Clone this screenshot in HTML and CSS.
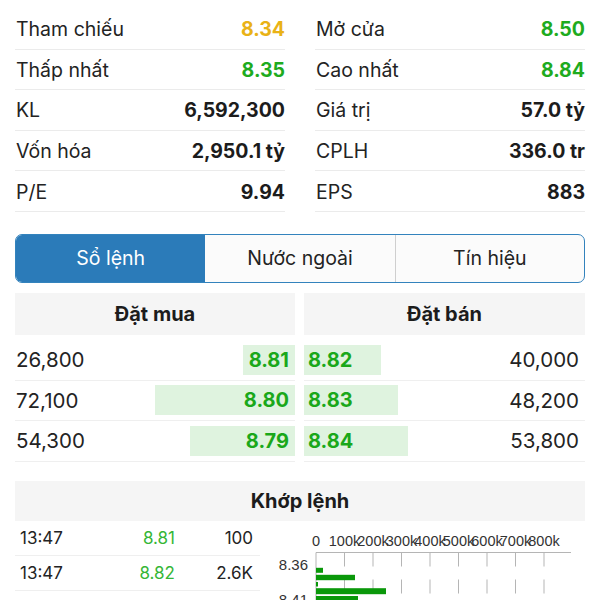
FILE: index.html
```html
<!DOCTYPE html>
<html lang="vi">
<head>
<meta charset="utf-8">
<title>Thông tin cổ phiếu</title>
<link rel="stylesheet" href="styles.css">
</head>
<body>
<div class="page">
  <section class="stats">
    <div class="col">
      <div class="row"><span class="lbl">Tham chiếu</span><span class="val ref">8.34</span></div>
      <div class="row"><span class="lbl">Thấp nhất</span><span class="val up">8.35</span></div>
      <div class="row"><span class="lbl">KL</span><span class="val">6,592,300</span></div>
      <div class="row"><span class="lbl">Vốn hóa</span><span class="val">2,950.1 tỷ</span></div>
      <div class="row"><span class="lbl">P/E</span><span class="val">9.94</span></div>
    </div>
    <div class="col">
      <div class="row"><span class="lbl">Mở cửa</span><span class="val up">8.50</span></div>
      <div class="row"><span class="lbl">Cao nhất</span><span class="val up">8.84</span></div>
      <div class="row"><span class="lbl">Giá trị</span><span class="val">57.0 tỷ</span></div>
      <div class="row"><span class="lbl">CPLH</span><span class="val">336.0 tr</span></div>
      <div class="row"><span class="lbl">EPS</span><span class="val">883</span></div>
    </div>
  </section>

  <nav class="tabs">
    <div class="tab active">Sổ lệnh</div>
    <div class="tab">Nước ngoài</div>
    <div class="tab">Tín hiệu</div>
  </nav>

  <section class="book">
    <div class="side buy">
      <div class="head">Đặt mua</div>
      <div class="brow"><span class="vol">26,800</span><span class="bar" style="width:52px">8.81</span></div>
      <div class="brow"><span class="vol">72,100</span><span class="bar" style="width:140px">8.80</span></div>
      <div class="brow"><span class="vol">54,300</span><span class="bar" style="width:105px">8.79</span></div>
    </div>
    <div class="side sell">
      <div class="head">Đặt bán</div>
      <div class="brow"><span class="bar" style="width:77px">8.82</span><span class="vol">40,000</span></div>
      <div class="brow"><span class="bar" style="width:94px">8.83</span><span class="vol">48,200</span></div>
      <div class="brow"><span class="bar" style="width:104px">8.84</span><span class="vol">53,800</span></div>
    </div>
  </section>

  <section class="match">
    <div class="head">Khớp lệnh</div>
    <div class="mbody">
      <div class="trades">
        <div class="trow"><span>13:47</span><span class="tp">8.81</span><span class="tv">100</span></div>
        <div class="trow"><span>13:47</span><span class="tp">8.82</span><span class="tv">2.6K</span></div>
        <div class="trow"><span>13:47</span><span class="tp">8.81</span><span class="tv">5.6K</span></div>
      </div>
      <svg class="chart" width="325" height="110" viewBox="0 0 325 110">
        <g class="axis-labels">
          <text x="56" y="24.5">0</text>
          <text x="84.5" y="24.5">100k</text>
          <text x="113" y="24.5">200k</text>
          <text x="141.5" y="24.5">300k</text>
          <text x="170" y="24.5">400k</text>
          <text x="198.5" y="24.5">500k</text>
          <text x="227" y="24.5">600k</text>
          <text x="255.5" y="24.5">700k</text>
          <text x="284" y="24.5">800k</text>
        </g>
        <line x1="56" y1="31.5" x2="311" y2="31.5" class="axis"/>
        <line x1="56" y1="31.5" x2="56" y2="110" class="axis"/>
        <g class="grid">
          <line x1="84.5" y1="31.5" x2="84.5" y2="110"/>
          <line x1="113" y1="31.5" x2="113" y2="110"/>
          <line x1="141.5" y1="31.5" x2="141.5" y2="110"/>
          <line x1="170" y1="31.5" x2="170" y2="110"/>
          <line x1="198.5" y1="31.5" x2="198.5" y2="110"/>
          <line x1="227" y1="31.5" x2="227" y2="110"/>
          <line x1="255.5" y1="31.5" x2="255.5" y2="110"/>
          <line x1="284" y1="31.5" x2="284" y2="110"/>
        </g>
        <g class="ylabels">
          <text x="48" y="49">8.36</text>
          <text x="48" y="84">8.41</text>
        </g>
        <g class="bars">
          <rect x="56" y="46.8" width="7" height="5"/>
          <rect x="56" y="53.8" width="39" height="5.4"/>
          <rect x="56" y="61" width="2" height="4.5"/>
          <rect x="56" y="67.2" width="70" height="6"/>
          <rect x="56" y="75" width="42" height="6"/>
        </g>
      </svg>
    </div>
  </section>
</div>
</body>
</html>
```
FILE: styles.css
```css
html, body {
  margin: 0;
  padding: 0;
  background: #ffffff;
}

body {
  font-family: Inter, "Noto Sans", "DejaVu Sans", sans-serif;
  color: #1f1f1f;
}

.page {
  padding: 9px 15px 0 15px;
}

/* ---------- stats ---------- */
.stats {
  display: grid;
  grid-template-columns: 1fr 1fr;
  column-gap: 30px;
}

.row {
  display: flex;
  justify-content: space-between;
  align-items: center;
  height: 38.6px;
  padding-top: 1px;
  border-bottom: 1px solid #ebebeb;
  font-size: 19.5px;
}

.lbl {
  color: #232323;
  padding-left: 1px;
}

.val {
  font-weight: 700;
  color: #1c1c1c;
}

.val.ref {
  color: #e9b216;
}

.val.up {
  color: #1eab1e;
}

/* ---------- tabs ---------- */
.tabs {
  margin-top: 22px;
  display: grid;
  grid-template-columns: 1fr 1fr 1fr;
  height: 49px;
  box-sizing: border-box;
  border: 1.5px solid #3383bd;
  border-radius: 7px;
  overflow: hidden;
  background: #fbfbfb;
}

.tab {
  display: flex;
  align-items: center;
  justify-content: center;
  font-size: 19.5px;
  color: #232323;
}

.tab + .tab {
  border-left: 1px solid #cfcfcf;
}

.tab.active {
  background: #2b7bb9;
  color: #ffffff;
}

.tab.active + .tab {
  border-left: none;
}

/* ---------- order book ---------- */
.book {
  margin-top: 10px;
  display: grid;
  grid-template-columns: 280px 1fr;
  column-gap: 9px;
}

.head {
  height: 42px;
  display: flex;
  align-items: center;
  justify-content: center;
  background: #f5f5f5;
  font-weight: 700;
  font-size: 20px;
  color: #1c1c1c;
}

.side .head {
  margin-bottom: 5px;
}

.brow {
  display: flex;
  justify-content: space-between;
  align-items: center;
  height: 39.6px;
  border-bottom: 1px solid #efefef;
  font-size: 20.5px;
}

.bar {
  height: 30px;
  display: flex;
  align-items: center;
  box-sizing: border-box;
  background: #dff3df;
  color: #1aa81a;
  font-weight: 700;
  font-size: 20px;
}

.buy .bar {
  justify-content: flex-end;
  padding-right: 6px;
}

.sell .bar {
  justify-content: flex-start;
  padding-left: 4px;
}

.buy .vol {
  padding-left: 1px;
}

.sell .vol {
  padding-right: 6px;
}

.vol {
  color: #232323;
}

/* ---------- matched ---------- */
.match {
  margin-top: 19px;
}

.match .head {
  height: 40px;
}

.mbody {
  display: flex;
  align-items: flex-start;
}

.trades {
  width: 245px;
  flex: none;
}

.trow {
  display: grid;
  grid-template-columns: 1fr 60px 78px;
  align-items: center;
  height: 34px;
  padding: 0 7px 0 5px;
  border-bottom: 1px solid #efefef;
  font-size: 17px;
  color: #232323;
}

.tp {
  text-align: right;
  color: #36b636;
}

.tv {
  text-align: right;
}

.chart {
  display: block;
  flex: none;
}

.axis-labels text {
  font-family: "Liberation Sans", Arial, sans-serif;
  font-size: 14.5px;
  fill: #333333;
  text-anchor: middle;
}

.ylabels text {
  font-family: "Liberation Sans", Arial, sans-serif;
  font-size: 15px;
  fill: #333333;
  text-anchor: end;
}

.axis {
  stroke: #b5b5b5;
  stroke-width: 1;
}

.grid line {
  stroke: #b5b5b5;
  stroke-width: 1;
  stroke-dasharray: 14 13;
}

.bars rect {
  fill: #0a980a;
}
```
